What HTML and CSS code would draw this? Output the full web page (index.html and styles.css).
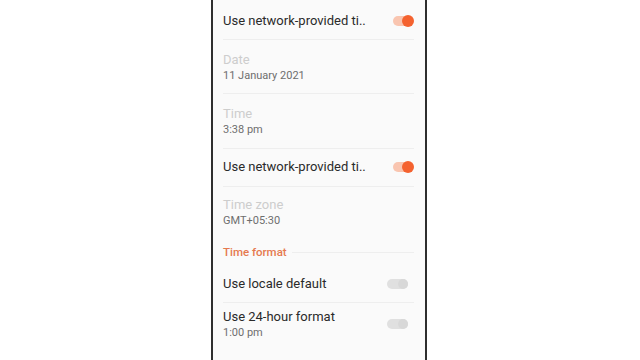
FILE: index.html
```html
<!DOCTYPE html>
<html>
<head>
<meta charset="utf-8">
<link rel="stylesheet" href="styles.css">
</head>
<body>
<div class="phone">
  <div class="row r1">
    <span class="title">Use network-provided ti..</span>
    <span class="switch on"><span class="thumb"></span></span>
  </div>
  <div class="divider"></div>
  <div class="row r2">
    <div class="stack">
      <span class="label">Date</span>
      <span class="value">11 January 2021</span>
    </div>
  </div>
  <div class="divider"></div>
  <div class="row r3">
    <div class="stack">
      <span class="label">Time</span>
      <span class="value">3:38 pm</span>
    </div>
  </div>
  <div class="divider"></div>
  <div class="row r4">
    <span class="title">Use network-provided ti..</span>
    <span class="switch on"><span class="thumb"></span></span>
  </div>
  <div class="divider"></div>
  <div class="row r5">
    <div class="stack">
      <span class="label">Time zone</span>
      <span class="value">GMT+05:30</span>
    </div>
  </div>
  <div class="section">
    <span class="section-title">Time format</span>
    <span class="section-line"></span>
  </div>
  <div class="row r6">
    <span class="title">Use locale default</span>
    <span class="switch off"><span class="thumb"></span></span>
  </div>
  <div class="divider"></div>
  <div class="row r7">
    <div class="stack">
      <span class="title">Use 24-hour format</span>
      <span class="value">1:00 pm</span>
    </div>
    <span class="switch off low"><span class="thumb"></span></span>
  </div>
</div>
</body>
</html>
```
FILE: styles.css
```css
html, body {
  margin: 0;
  padding: 0;
  background: #ffffff;
  width: 640px;
  height: 360px;
  overflow: hidden;
  font-family: Roboto, "Noto Sans", sans-serif;
}
.phone {
  margin-left: 211px;
  width: 212px;
  height: 360px;
  border-left: 2px solid #2e2e2e;
  border-right: 2px solid #2e2e2e;
  background: #fafafa;
  box-sizing: content-box;
}
.row {
  display: flex;
  align-items: center;
  justify-content: space-between;
  padding-left: 10px;
  padding-right: 12px;
}
.r1 { padding-top: 13px; padding-bottom: 10px; }
.r2 { padding-top: 12px; padding-bottom: 9px; }
.r3 { padding-top: 12px; padding-bottom: 10px; }
.r4 { padding-top: 10px; padding-bottom: 11px; }
.r5 { padding-top: 10px; padding-bottom: 0; }
.r6 { padding-top: 16px; padding-bottom: 10px; }
.r7 { padding-top: 6px; padding-bottom: 10px; }
.stack {
  display: flex;
  flex-direction: column;
}
.title {
  font-size: 13px;
  line-height: 16px;
  color: #2a2a2a;
}
.label {
  font-size: 13px;
  line-height: 16px;
  color: #cdcdcd;
}
.value {
  font-size: 11px;
  line-height: 16px;
  color: #6e6e6e;
}
.divider {
  height: 1px;
  margin: 0 11px 0 10px;
  background: #eeeeee;
}
.section {
  display: flex;
  align-items: center;
  padding: 15px 11px 0 10px;
  height: 16px;
}
.section-title {
  font-size: 11.5px;
  line-height: 16px;
  font-weight: 500;
  color: #e5794f;
}
.section-line {
  flex: 1;
  height: 1px;
  margin-left: 5px;
  background: #eeeeee;
}
.switch {
  position: relative;
  width: 20px;
  height: 10px;
  border-radius: 5px;
}
.switch.on {
  background: #f9c5b0;
}
.switch.on .thumb {
  position: absolute;
  right: -1px;
  top: -1px;
  width: 12px;
  height: 12px;
  border-radius: 50%;
  background: #f4622f;
}
.switch.off {
  width: 21px;
  margin-right: 5px;
  background: #e0e0e0;
}
.switch.off.low {
  margin-top: -2px;
}
.switch.off .thumb {
  position: absolute;
  right: 0;
  top: 0;
  width: 10px;
  height: 10px;
  border-radius: 50%;
  background: #d8d8d8;
}
```
